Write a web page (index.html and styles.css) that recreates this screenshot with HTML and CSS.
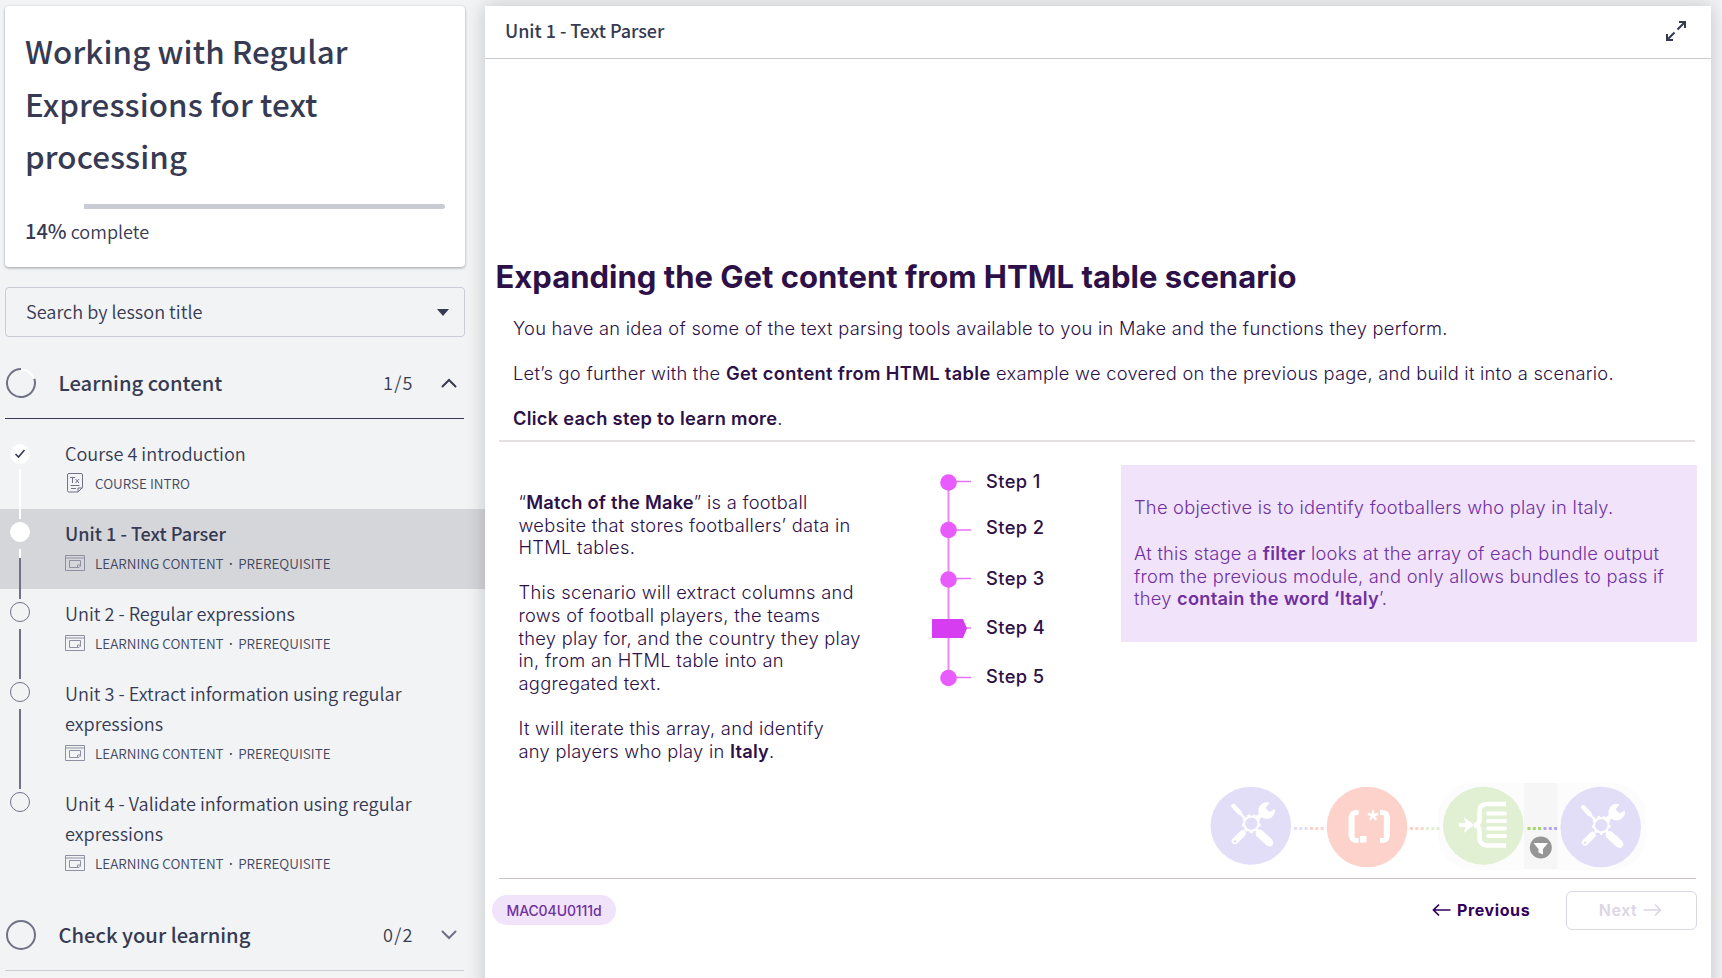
FILE: index.html
```
<!DOCTYPE html>
<html lang="en">
<head>
<meta charset="utf-8">
<title>Working with Regular Expressions for text processing</title>
<link rel="stylesheet" href="styles.css">
</head>
<body>
<svg width="0" height="0" class="defs">
  <symbol id="i-learn" viewBox="0 0 20 16"><path d="M.5.5h19v15H.5zM.5 3h19M4.500 5.500h11v5.500l-1.500 1.500h-9.500zM12.500 12.500v-2.500h3" fill="none" stroke="currentColor"/></symbol>
  <symbol id="i-tools" viewBox="0 0 44 46">
    <g fill="none" stroke="currentColor" stroke-linecap="round">
      <path d="M2.500 4l6 6.500" stroke-width="4.500"/><path d="M8 10l6.500 7" stroke-width="2.400"/>
      <path d="M11.500 31.500L4 39" stroke-width="6.500"/>
      <path d="M27.500 30.500l11.500 10.500" stroke-width="8" stroke-linecap="butt"/><path d="M28 31l11 10" stroke-width="6.500"/>
      <path d="M25.500 16.500l6-5" stroke-width="4.500" stroke-linecap="butt"/>
      <circle cx="20.300" cy="21.700" r="7.200" stroke-width="2"/>
      <circle cx="20.300" cy="21.700" r="8.500" stroke-width="2" stroke-linecap="butt" stroke-dasharray="2.800 3.134"/>
    </g>
    <path d="M38.500.800A8.300 8.300 0 1 0 43.800 7l-5.300 3-4-4z" fill="currentColor"/>
    <circle cx="4" cy="39.200" r="1.300" fill="#e3def8"/>
  </symbol>
</svg>
<div class="page">
  <aside class="sidebar">
    <section class="course">
      <h1>Working with Regular<br>Expressions for text<br>processing</h1>
      <div class="bar"><span></span></div>
      <p class="t"><b>14%</b> complete</p>
    </section>
    <div class="search t"><span>Search by lesson title</span><i></i></div>
    <header class="group open">
      <svg width="30" height="30" viewBox="0 0 30 30" fill="none" stroke-width="2"><path d="M28.300 10.700A14 14 0 1 1 15 1" stroke="#6f7287"/><path d="M15 1.500a13.500 13.500 0 0 1 12.800 9.200" stroke="#fff"/></svg>
      <h2>Learning content</h2><span class="count">1/5</span>
      <svg width="16" height="10" viewBox="0 0 16 10"><path d="M1.500 8.500L8 2l6.500 6.500" fill="none" stroke="#363a52" stroke-width="2" stroke-linecap="round"/></svg>
    </header>
    <ul class="lessons">
      <li>
        <div class="rail first"><span class="dot done"><svg width="12" height="10" viewBox="0 0 12 10"><path d="M1.500 5l3 3 6-7" fill="none" stroke="#363a52" stroke-width="1.600"/></svg></span><span class="line white"></span></div>
        <div><p class="t">Course 4 introduction</p><p class="meta"><svg width="20" height="20" viewBox="0 0 20 20" fill="none" stroke="#6f7287"><path d="M4 .5h12q1.500 0 1.500 1.500v12.500l-4.500 4.500H4q-1.500 0-1.500-1.500V2Q2.500.5 4 .5zM13 19v-4h4.500M5.500 12.500h9M6 15.500h5"/><path d="M5 4.500h5M7.500 4.500V10M10.500 6l3.500 4M14 6l-3.500 4"/></svg><span>COURSE INTRO</span></p></div>
      </li>
      <li class="active">
        <div class="rail"><span class="dot done"></span><span class="line half"></span></div>
        <div><p class="t">Unit 1 - Text Parser</p><p class="meta"><svg width="20" height="16"><use href="#i-learn"/></svg><span>LEARNING CONTENT<i>·</i>PREREQUISITE</span></p></div>
      </li>
      <li>
        <div class="rail"><span class="dot"></span><span class="line"></span></div>
        <div><p class="t">Unit 2 - Regular expressions</p><p class="meta"><svg width="20" height="16"><use href="#i-learn"/></svg><span>LEARNING CONTENT<i>·</i>PREREQUISITE</span></p></div>
      </li>
      <li>
        <div class="rail"><span class="dot"></span><span class="line"></span></div>
        <div><p class="t">Unit 3 - Extract information using regular<br>expressions</p><p class="meta"><svg width="20" height="16"><use href="#i-learn"/></svg><span>LEARNING CONTENT<i>·</i>PREREQUISITE</span></p></div>
      </li>
      <li>
        <div class="rail"><span class="dot"></span></div>
        <div><p class="t">Unit 4 - Validate information using regular<br>expressions</p><p class="meta"><svg width="20" height="16"><use href="#i-learn"/></svg><span>LEARNING CONTENT<i>·</i>PREREQUISITE</span></p></div>
      </li>
    </ul>
    <header class="group">
      <svg width="30" height="30" viewBox="0 0 30 30" fill="none" stroke-width="2"><circle cx="15" cy="15" r="14" stroke="#6f7287"/></svg>
      <h2>Check your learning</h2><span class="count">0/2</span>
      <svg width="16" height="10" viewBox="0 0 16 10"><path d="M1.500 1.500L8 8l6.500-6.500" fill="none" stroke="#6f7287" stroke-width="2" stroke-linecap="round"/></svg>
    </header>
  </aside>

  <main class="viewer">
    <header class="top">
      <span>Unit 1 - Text Parser</span>
      <svg width="22" height="22" viewBox="0 0 22 22" fill="none" stroke="#363a52" stroke-width="2"><path d="M14 2h6v6M20 2l-7.500 7.500M8 20H2v-6M2 20l7.500-7.500"/></svg>
    </header>
    <article class="slide">
      <h2 class="headline">Expanding the Get content from HTML table scenario</h2>
      <div class="intro">
        <p>You have an idea of some of the text parsing tools available to you in Make and the functions they perform.</p>
        <p>Let’s go further with the <b class="wide">Get content from HTML table</b> example we covered on the previous page, and build it into a scenario.</p>
        <p><b>Click each step to learn more</b>.</p>
      </div>
      <div class="columns">
        <div class="story">
          <p>“<b>Match of the Make</b>” is a football<br>website that stores footballers’ data in<br>HTML tables.</p>
          <p>This scenario will extract columns and<br>rows of football players, the teams<br>they play for, and the country they play<br>in, from an HTML table into an<br>aggregated text.</p>
          <p>It will iterate this array, and identify<br>any players who play in <b>Italy</b>.</p>
        </div>
        <svg class="track" width="42" height="216" viewBox="0 0 42 216">
          <path d="M16.500 8v200" stroke="#e98bf7" stroke-width="2"/>
          <path d="M24 9.500h15M24 58h15M24 106.500h15M24 156h15M24 205.500h15" stroke="#e573f6" stroke-width="1.500"/>
          <g fill="#e85cff"><circle cx="16.500" cy="10.500" r="8.300"/><circle cx="16.500" cy="58" r="8.300"/><circle cx="16.500" cy="107.500" r="8.300"/><circle cx="16.500" cy="206" r="8.300"/></g>
          <path d="M0 147h31l4 9.500-4 9.500H0z" fill="#d63df0"/>
        </svg>
        <div class="steps"><span class="s1">Step 1</span><span class="s2">Step 2</span><span>Step 3</span><span>Step 4</span><span>Step 5</span></div>
        <div class="panel">
          <p>The objective is to identify footballers who play in Italy.</p>
          <p>At this stage a <b>filter</b> looks at the array of each bundle output<br>from the previous module, and only allows bundles to pass if<br>they <b>contain the word ‘Italy</b>’.</p>
        </div>
      </div>
      <div class="flow">
        <svg width="454" height="88" viewBox="0 0 454 88">
          <rect x="229" y="0" width="208" height="87" rx="34" fill="#fcfcfc"/>
          <rect x="315" y="0" width="33.500" height="86" fill="#f6f6f6"/>
          <g><ellipse cx="41.800" cy="42.700" rx="40.300" ry="39" fill="#e3def8"/><ellipse cx="158" cy="44" rx="40.300" ry="40.300" fill="#fcd2cb"/><ellipse cx="274.300" cy="42.700" rx="40.300" ry="39" fill="#e1f0d3"/><ellipse cx="391.700" cy="44" rx="40.300" ry="40.300" fill="#e3def8"/></g>
          <g fill="none" stroke-width="3" stroke-dasharray="3 2.300"><path d="M85 45.500h14" stroke="#e3def8"/><path d="M101 45.500h14M201 45.500h14" stroke="#fcd2cb"/><path d="M217 45.500h14" stroke="#e1f0d3"/><path d="M318.500 45.500h14" stroke="#a4d56f"/><path d="M334.500 45.500h14" stroke="#b4a3ef"/></g>
          <use href="#i-tools" x="22" y="19" width="44" height="46" color="#fff"/>
          <use href="#i-tools" x="372" y="20.500" width="44" height="46" color="#fff"/>
          <g fill="none" stroke="#fff" stroke-width="5.500"><path d="M149.700 29.500h-2q-5 0-5 4v20q0 4 5 4h2M171 29.500h2q5 0 5 4v20q0 4-5 4h-2" stroke-width="5"/><path d="M142.500 33v21M177.800 33v21" stroke-width="6"/><path d="M164 27v5.500M158.800 30.800l5.200 1.700M169.200 30.800l-5.200 1.700M160.800 36.800l3.200-4.300M167.200 36.800l-3.200-4.300" stroke-width="2.400"/></g>
          <rect x="151" y="53" width="6.500" height="6.500" fill="#fff"/>
          <g fill="none" stroke="#fff" stroke-width="4"><path d="M297 21h-18q-8.500 0-8.500 7v9q0 4-5 5 5 1.500 5 5v8q0 7.500 8.500 7.500h18" stroke-width="4.500"/><path d="M279 30.500h17M279 38h17M279 45.500h17M279 53h17" stroke-linecap="round"/><path d="M250 42h8"/></g><path d="M255 34l10 8-10 8 2-8z" fill="#fff"/>
          <circle cx="331.800" cy="64.500" r="11" fill="#969696"/><path d="M324.500 60h14.500l-5 6v5.500l-4.500-2v-3.500z" fill="#fff"/>
        </svg>
      </div>
      <footer class="bottom">
        <span class="code">MAC04U0111d</span>
        <span class="prev"><svg width="19" height="14" viewBox="0 0 19 14"><path d="M18.500 7H1.500M7 1.500L1.500 7 7 12.500" fill="none" stroke="currentColor" stroke-width="1.700"/></svg>Previous</span>
        <span class="next">Next<svg width="19" height="14" viewBox="0 0 19 14"><path d="M.5 7h17M12 1.500L17.500 7 12 12.500" fill="none" stroke="currentColor" stroke-width="1.700"/></svg></span>
      </footer>
    </article>
  </main>
</div>
</body>
</html>
```
FILE: styles.css
```
* { box-sizing: border-box; margin: 0; padding: 0; }
body { width: 1722px; height: 978px; overflow: hidden; background: #f1f3f5; color: #363a52; font-family: "Noto Sans CJK SC", sans-serif; }
.defs { display: block; height: 0; }
.page { display: flex; height: 978px; }
.sidebar { width: 485px; flex: none; padding-top: 6px; }
.course { width: 460px; height: 261px; margin-left: 5px; padding: 19px 20px; background: #fff; border-radius: 4px; box-shadow: 0 1px 3px rgba(0,0,0,.35); }
h1 { font-size: 31.300px; font-weight: 500; line-height: 52.500px; letter-spacing: .1px; white-space: nowrap; }
.bar { height: 5px; margin: 21px 0 7px; background: #c9cbd5; border-radius: 3px; }
.bar span { display: block; width: 60px; height: 5px; margin-left: -1px; background: #fff; }
.t { font-size: 18.100px; line-height: 30px; font-weight: 350; white-space: nowrap; }
.t b { font-size: 20px; font-weight: 500; line-height: 20px; }
.search { display: flex; justify-content: space-between; align-items: center; width: 460px; height: 50px; margin: 20px 0 0 5px; padding: 0 15px 3px 20px; border: 1px solid #c9cbd5; border-radius: 4px; }
.search i { border: 6px solid transparent; border-top: 7px solid #363a52; border-bottom: 0; margin-top: 3px; }
.group { display: flex; align-items: center; width: 459px; height: 71px; margin-left: 5px; padding: 0 7px 0 1px; border-bottom: 1px solid #c9cbd5; }
.group.open { margin-top: 11px; border-color: #363a52; }
.group h2 { flex: 1; margin-left: 22.500px; font-size: 20.200px; font-weight: 500; line-height: 30px; }
.count { width: 58px; padding-bottom: 2px; font-size: 18.100px; line-height: 30px; font-weight: 350; letter-spacing: 1.200px; }
.lessons { list-style: none; padding: 10px 0 1px; height: 481px; }
.lessons li { display: flex; height: 80px; padding-top: 9px; }
.lessons li:nth-child(n+4) { height: 110px; }
.lessons li.active { background: #d5d6da; }
.active .t { font-weight: 500; }
.rail { position: relative; z-index: 1; display: flex; flex-direction: column; align-items: center; width: 40px; margin-right: 25px; padding-top: 4px; }
.rail.first { padding-top: 6px; }
.rail.first .line { margin-top: 5px; }
.dot { flex: none; width: 20px; height: 20px; border: 1px solid #6f7287; border-radius: 50%; display: grid; place-items: center; }
.dot.done { background: #fff; border-color: #fff; }
.line { flex: none; width: 2px; height: 50px; margin-top: 7px; background: #6f7287; }
li:nth-child(4) .line { height: 80px; }
.line.white { background: #fff; }
.line.half { background: linear-gradient(#fff 9px, #6f7287 9px); }
.meta { display: flex; align-items: center; height: 30px; gap: 10px; font-size: 13.500px; font-weight: 350; white-space: nowrap; color: #43475d; }
.meta i { display: inline-block; width: 14.500px; text-align: center; font-family: "Noto Sans", sans-serif; font-style: normal; font-weight: 500; line-height: 14px; }
.meta svg { color: #8d90a0; }
.viewer { width: 1226px; height: 990px; margin-top: 6px; flex: none; background: #fff; box-shadow: 0 0 18px rgba(0,0,0,.2); }
.top { display: flex; align-items: center; justify-content: space-between; height: 53px; padding: 0 24px 3px 20px; border-bottom: 1px solid #c9cbd5; font-size: 18px; }
.top span { padding-bottom: 2px; font-weight: 500; letter-spacing: -.03px; }
.slide { font-family: Inter, sans-serif; color: #2d1048; letter-spacing: .266px; }
.headline { padding: 198px 0 0 10.500px; font-size: 31px; line-height: 40px; font-weight: 650; letter-spacing: .01px; white-space: nowrap; }
.intro { padding: 18px 0 0 28px; font-size: 18.300px; font-weight: 300; letter-spacing: .268px; white-space: nowrap; }
.intro p { height: 45px; line-height: 26px; }
.intro .wide { letter-spacing: .34px; }
b { font-weight: 600; }
.columns { display: flex; height: 330px; margin: -10px 0 0 14px; width: 1196px; border-top: 2px solid #e4dfe3; }
.story { flex: none; width: 413px; padding: 49px 0 0 19.500px; font-size: 18.300px; line-height: 22.620px; font-weight: 300; letter-spacing: .29px; white-space: nowrap; }
.story b { letter-spacing: .2px; }
.story p + p { margin-top: 22.620px; }
.track { flex: none; margin: 30px 12px 0 20px; }
.steps { flex: none; display: flex; flex-direction: column; width: 135px; padding-top: 26px; font-size: 18.300px; font-weight: 550; letter-spacing: .4px; }
.steps span { height: 49px; line-height: 26px; }
.steps .s1 { height: 46px; }
.steps .s2 { height: 51px; }
.panel { flex: none; width: 576px; height: 177px; margin-top: 23px; padding: 31px 0 0 13px; background: #f0e3fa; color: #7030a0; font-size: 18.300px; line-height: 22.500px; font-weight: 300; letter-spacing: .25px; white-space: nowrap; }
.panel p + p { margin-top: 23.500px; }
.flow { display: flex; width: 1197px; height: 109px; margin-left: 14px; padding: 13px 0 0 710px; border-bottom: 1px solid #c9bfc5; }
.bottom { display: flex; align-items: center; padding: 12px 0 0 7px; }
.bottom .code { margin-top: -2px; }
.code { width: 124px; height: 30px; line-height: 31px; text-align: center; border-radius: 15px; background: #f0e3fa; color: #7030a0; font-size: 14px; font-weight: 500; letter-spacing: -.1px; }
.prev { display: flex; align-items: center; gap: 6px; margin: -2px 0 0 816px; width: 134px; color: #32005c; font-size: 16px; font-weight: 650; letter-spacing: .6px; }
.next { display: flex; align-items: center; justify-content: center; gap: 6px; width: 131px; height: 39px; padding: 0 2px 2px 0; border: 1px solid #dcd5e6; border-radius: 6px; color: #dcd5e6; font-size: 16px; font-weight: 600; letter-spacing: .5px; }
```
